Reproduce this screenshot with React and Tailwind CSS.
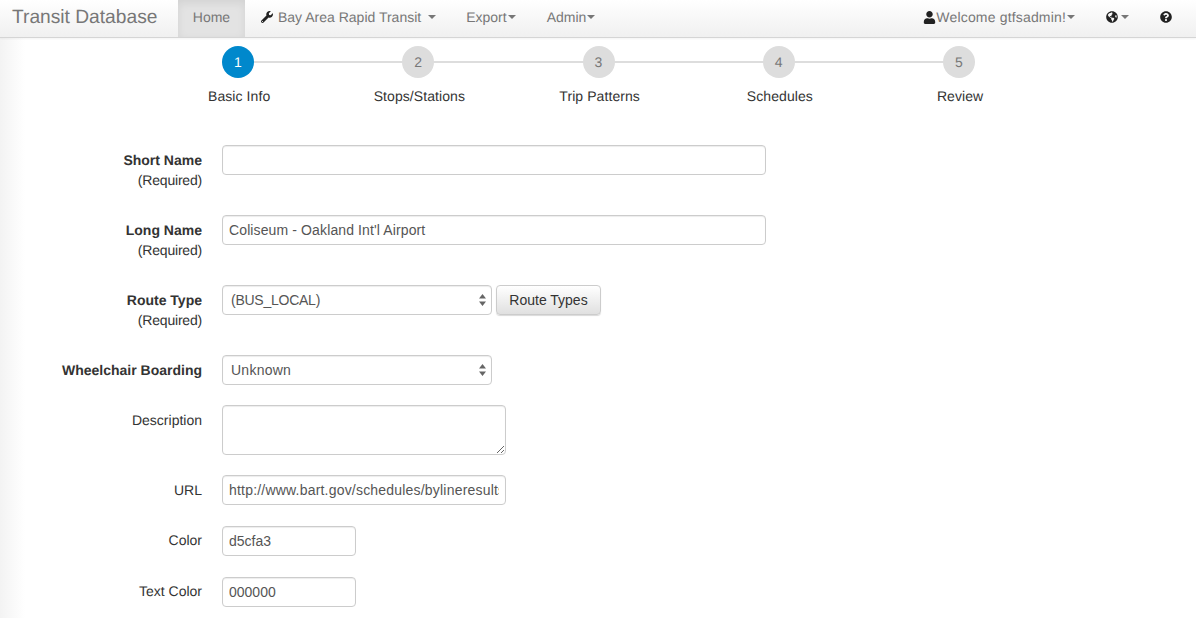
import { FaWrench, FaUser, FaGlobeAmericas, FaQuestionCircle } from "react-icons/fa";

const STEPS = ["Basic Info", "Stops/Stations", "Trip Patterns", "Schedules", "Review"];

const inputClass =
  "h-[30px] rounded-[4px] border border-[#ccc] bg-white px-[6px] text-[14px] text-[#555] shadow-[inset_0_1px_1px_rgba(0,0,0,0.075)] outline-none";

function Caret({ className = "" }) {
  return <span className={`inline-block h-0 w-0 border-x-[4px] border-t-[4px] border-x-transparent border-t-[#777] ${className}`} />;
}

function NavItem({ children, className = "" }) {
  return <div className={`flex h-full items-center pb-[3px] text-[14px] text-[#777] ${className}`}>{children}</div>;
}

function Navbar() {
  return (
    <div className="flex h-[38px] items-center border-b border-[#d5d5d5] bg-gradient-to-b from-white to-[#f0f0f0] shadow-[0_1px_2px_rgba(0,0,0,0.05)]">
      <div className="w-[178px] pb-[1px] pl-[12px] text-[19.2px] text-[#777]">Transit Database</div>
      <NavItem className="w-[67px] justify-center bg-[#e3e3e3] text-[#555] shadow-[inset_0_3px_9px_rgba(0,0,0,0.075)]">Home</NavItem>
      <NavItem className="ml-[16px] gap-[5px]">
        <FaWrench className="text-[12px] text-[#222]" />
        <span>Bay Area Rapid Transit</span>
        <Caret className="ml-[2px]" />
      </NavItem>
      <NavItem className="ml-[30px]">
        Export
        <Caret className="ml-px" />
      </NavItem>
      <NavItem className="ml-[31px]">
        Admin
        <Caret className="ml-px" />
      </NavItem>
      <div className="flex-1" />
      <NavItem className="tracking-[0.17px]">
        <FaUser className="text-[13px] text-[#222]" />
        Welcome gtfsadmin!
        <Caret className="ml-px" />
      </NavItem>
      <NavItem className="ml-[31px] gap-[3px]">
        <FaGlobeAmericas className="text-[12px] text-[#222]" />
        <Caret />
      </NavItem>
      <NavItem className="ml-[31px] mr-[24px]">
        <FaQuestionCircle className="text-[12px] text-[#222]" />
      </NavItem>
    </div>
  );
}

function Stepper() {
  return (
    <div className="pt-[8px]">
      <div className="flex items-center pl-[222px]">
        {STEPS.map((s, i) => (
          <div key={s} className="flex items-center">
            <div
              className={`flex h-[32px] w-[32px] items-center justify-center rounded-full text-[14px] ${
                i === 0 ? "bg-[#0088cc] text-white" : "bg-[#dddddd] text-[#777]"
              }`}
            >
              {i + 1}
            </div>
            {i < STEPS.length - 1 && <div className="mt-[-1px] h-[2px] w-[148.25px] bg-[#dddddd]" />}
          </div>
        ))}
      </div>
      <div className="mt-[8px] flex pl-[149px]">
        {STEPS.map((s) => (
          <div key={s} className="w-[180.25px] text-center text-[14px] leading-[20px] tracking-[0.08px] text-[#333]">
            {s}
          </div>
        ))}
      </div>
    </div>
  );
}

function Row({ label, bold, required, className = "", labelClass = "pt-[5px]", children }) {
  return (
    <div className={`flex items-start ${className}`}>
      <div className={`w-[202px] text-right text-[14px] leading-[20px] text-[#333] ${labelClass}`}>
        <div className={bold ? "font-bold" : ""}>{label}</div>
        {required && <div className="tracking-[-0.2px]">(Required)</div>}
      </div>
      <div className="ml-[20px] flex gap-[4px]">{children}</div>
    </div>
  );
}

function Select({ value, className = "" }) {
  return (
    <div className="relative h-[30px] w-[270px]">
      <select
        defaultValue={value}
        className={`${inputClass} w-full appearance-none pl-[8px] text-[#555] ${className}`}
      >
        <option>{value}</option>
      </select>
      <svg className="pointer-events-none absolute right-[6px] top-[9px]" width="7" height="12" viewBox="0 0 7 12">
        <path d="M3.5 0 7 4.5H0z M3.5 12 0 7.5h7z" fill="#666" />
      </svg>
    </div>
  );
}

export default function App() {
  return (
    <div className="h-[618px] overflow-hidden bg-gradient-to-r from-[#f3f3f3] to-white to-[25px] font-['Liberation_Sans',Arial,sans-serif] [text-rendering:geometricPrecision]">
      <Navbar />
      <Stepper />
      <div className="mt-[39px]">
        <Row label="Short Name" bold required className="h-[70px]">
          <input className={`${inputClass} w-[544px]`} />
        </Row>
        <Row label="Long Name" bold required className="h-[70px]">
          <input className={`${inputClass} w-[544px] tracking-[0.12px]`} defaultValue="Coliseum - Oakland Int'l Airport" />
        </Row>
        <Row label="Route Type" bold required className="h-[70px]">
          <Select value="(BUS_LOCAL)" className="tracking-[-0.25px]" />
          <button className="h-[30px] w-[105px] rounded-[4px] border border-[#ccc] bg-gradient-to-b from-white to-[#e0e0e0] text-[14px] text-[#333] shadow-[0_1px_1px_rgba(0,0,0,0.15)]">
            Route Types
          </button>
        </Row>
        <Row label="Wheelchair Boarding" bold className="h-[50px]">
          <Select value="Unknown" className="tracking-[0.25px]" />
        </Row>
        <Row label="Description" className="h-[70px]">
          <textarea className={`${inputClass} block h-[50px] w-[284px]`} />
        </Row>
        <Row label="URL" className="h-[51px]">
          <input className={`${inputClass} w-[284px] tracking-[0.2px]`} defaultValue="http://www.bart.gov/schedules/bylineresults?route=5" />
        </Row>
        <Row label="Color" labelClass="pt-[4px]" className="h-[51px]">
          <input className={`${inputClass} w-[134px]`} defaultValue="d5cfa3" />
        </Row>
        <Row label="Text Color" labelClass="pt-[4px]" className="h-[41px]">
          <input className={`${inputClass} w-[134px]`} defaultValue="000000" />
        </Row>
      </div>
    </div>
  );
}
